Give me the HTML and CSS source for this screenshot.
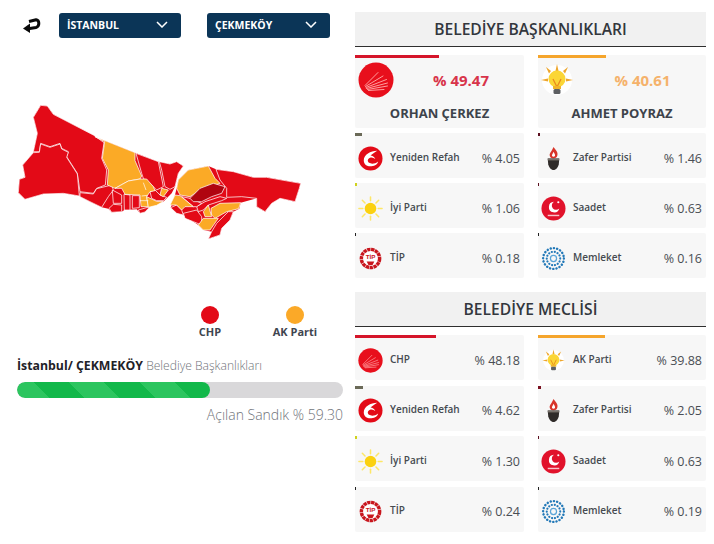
FILE: index.html
```html
<!DOCTYPE html>
<html lang="tr">
<head>
    <meta charset="UTF-8">
    <meta name="viewport" content="width=device-width, initial-scale=1.0">
    <title>Seçim Sonuçları</title>
    <link rel="stylesheet" href="styles.css">
</head>
<body>
    <!-- party logos, reused in both result lists -->
    <svg class="defs" width="0" height="0">
        <symbol id="logo-chp" viewBox="0 0 36 36">
            <circle cx="18" cy="18" r="17.5" fill="#e80f1c"/>
            <g stroke="#ff9f9f" stroke-width="1" stroke-linecap="round" fill="none">
                <path d="M7 23.500 L20 10.500"/>
                <path d="M7.500 24.500 L25 14"/>
                <path d="M8 25.500 L28.500 17.500"/>
                <path d="M8.500 26.500 L29.500 21"/>
                <path d="M9.500 27.500 L29.500 24"/>
                <path d="M10.500 28.500 L26 27.500"/>
            </g>
        </symbol>
        <symbol id="logo-akp" viewBox="0 0 36 36">
            <circle cx="18" cy="18" r="15" fill="#fff"/>
            <g fill="#eea62c">
                <path d="M16.500 9 L18 2 L19.500 9 Z"/>
                <path d="M24 9 L29 5 L26 11.500 Z"/>
                <path d="M27 16.500 L34 18 L27 19.500 Z"/>
                <path d="M12 9 L7 5 L10 11.500 Z"/>
                <path d="M9 16.500 L2 18 L9 19.500 Z"/>
            </g>
            <circle cx="18" cy="17" r="8.500" fill="#fbd636"/>
            <path d="M14 17 L18 25 L22 17" fill="none" stroke="#ea8a1d" stroke-width="1.300"/>
            <rect x="14" y="24" width="8" height="3" fill="#f0b429"/>
            <rect x="14.500" y="27" width="7" height="5" rx="1.500" fill="#5d5f62"/>
        </symbol>
        <symbol id="logo-yrp" viewBox="0 0 26 26">
            <circle cx="13" cy="13" r="12.500" fill="#e30a17"/>
            <path d="M20 5 C13 5 6 9 6 15 C6 19.500 10 21.500 14 21 C18 20.500 20.500 18.500 21 16 C18 18.500 14 19 11.500 17.500 C9.500 16 10 13.500 12 12.500 C14 11.500 16 12 18 13.500 C17 11.500 15 10 13 10 C15 8 18 6.500 20 5 Z" fill="#fff"/>
        </symbol>
        <symbol id="logo-iyi" viewBox="0 0 26 26">
            <circle cx="13" cy="13" r="6" fill="#fbd10f"/>
            <g stroke="#fde767" stroke-width="1.600" stroke-linecap="round">
                <path d="M13 1 V5"/>
                <path d="M13 21 V25"/>
                <path d="M1 13 H5"/>
                <path d="M21 13 H25"/>
                <path d="M4.500 4.500 L7.300 7.300"/>
                <path d="M18.700 18.700 L21.500 21.500"/>
                <path d="M21.500 4.500 L18.700 7.300"/>
                <path d="M7.300 18.700 L4.500 21.500"/>
            </g>
        </symbol>
        <symbol id="logo-zafer" viewBox="0 0 26 26">
            <path d="M13 1 C15 4 18 6 17 10 C16.500 12.500 14.500 13 13 13 C11 13 9 11.500 9 9.500 C9 7 11.500 5 13 1 Z" fill="#d8352a"/>
            <path d="M13 6 C14 8 15 9 14.500 10.500 C14 11.500 12 11.500 11.500 10.500 C11 9 12.500 8 13 6 Z" fill="#fff"/>
            <path d="M7 13 H19 L18.500 19 C18 22 15.500 25 13 25 C10.500 25 8 22 7.500 19 Z" fill="#2f2b29"/>
            <path d="M7 13 H19 V15 H7 Z" fill="#77706a"/>
        </symbol>
        <symbol id="logo-saadet" viewBox="0 0 26 26">
            <circle cx="13" cy="13" r="12.500" fill="#e1122b"/>
            <path d="M13.500 6 A5.500 5.500 0 1 0 19 13 A4.500 4.500 0 1 1 13.500 6 Z" fill="#fff"/>
            <circle cx="18" cy="6.500" r="1.100" fill="#fff"/>
            <rect x="7" y="19.500" width="12" height="1.500" fill="#fff" opacity=".75"/>
        </symbol>
        <symbol id="logo-memleket" viewBox="0 0 26 26">
            <g fill="none" stroke="#2379b8" stroke-linecap="round">
                <circle cx="13" cy="13" r="10.800" stroke-width="2.500" stroke-dasharray=".1 3.300"/>
                <circle cx="13" cy="13" r="7" stroke-width="2.200" stroke-dasharray=".1 3"/>
                <circle cx="13" cy="13" r="3.200" stroke="#5aa5d8" stroke-width="1.300"/>
            </g>
        </symbol>
    </svg>

    <div class="page">
        <div class="left-col">
            <div class="filters">
                <svg class="back-icon" viewBox="0 0 18 15" width="18" height="15">
                    <path d="M6 3.500 L13 1.800 C16.500 1.500 17 8.500 13 9.500 L3.500 11" fill="none" stroke="#0a0a0a" stroke-width="3"/>
                    <path d="M0 10.500 L7 5.500 L7 15 Z" fill="#0a0a0a"/>
                </svg>
                <div class="select select-city">
                    <span>İSTANBUL</span>
                    <svg class="chevron" viewBox="0 0 12 7" width="12" height="7"><path d="M1 1 L6 6 L11 1" fill="none" stroke="#fff" stroke-width="1.500"/></svg>
                </div>
                <div class="select select-district">
                    <span>ÇEKMEKÖY</span>
                    <svg class="chevron" viewBox="0 0 12 7" width="12" height="7"><path d="M1 1 L6 6 L11 1" fill="none" stroke="#fff" stroke-width="1.500"/></svg>
                </div>
            </div>

            <svg class="map" viewBox="0 0 960 480" width="320" height="160">
                <!-- base shapes so the small districts have no gaps between them -->
                <path class="base" d="M100 82 L122 46 L142 48 L160 73 L285 140 L405 188 L475 215 L510 222 L530 215 L550 228 L535 250 L525 290 L515 310 L490 335 L445 352 L435 366 L420 370 L410 358 L373 360 L365 365 L335 367 L325 356 L305 352 L270 335 L238 318 L190 310 L130 312 L75 328 L55 308 L58 268 L75 262 L68 225 L100 188 L112 130 Z"/>
                <path class="base" d="M535 270 L565 240 L625 228 L648 238 L700 245 L760 262 L800 262 L902 280 L898 295 L885 335 L840 325 L815 340 L795 365 L770 350 L770 325 L722 338 L718 356 L700 365 L690 390 L665 415 L660 435 L625 447 L635 425 L610 420 L595 405 L580 395 L550 375 L512 353 L525 315 L530 295 Z"/>
                <g class="red">
                    <path d="M100 82 L122 46 L142 48 L160 73 L280 135 L312 158 L305 205 L320 240 L316 285 L290 295 L280 310 L240 305 L232 250 L200 200 L205 185 L185 175 L180 160 L150 170 L122 160 L118 185 L100 185 L112 130 Z"/>
                    <path d="M122 162 L150 172 L180 162 L185 177 L205 187 L200 202 L232 252 L238 318 L190 310 L130 312 L75 328 L55 308 L58 268 L75 262 L68 225 L100 188 L118 187 Z"/>
                    <path d="M240 308 L280 312 L290 296 L315 290 L335 285 L340 300 L325 320 L305 352 L270 335 L240 320 Z"/>
                    <path d="M408 190 L475 215 L480 240 L490 290 L470 300 L455 285 L430 265 L425 250 Z"/>
                    <path d="M478 215 L510 222 L530 215 L550 228 L535 250 L525 290 L510 298 L495 290 L485 240 Z"/>
                    <path d="M337 300 L365 315 L365 340 L340 340 Z"/>
                    <path d="M372 313 L390 315 L390 360 L373 360 Z"/>
                    <path d="M397 317 L418 317 L418 353 L397 355 Z"/>
                    <path d="M340 343 L365 345 L365 365 L335 367 L327 355 Z"/>
                    <path d="M415 360 L450 350 L435 366 L420 370 Z"/>
                    <path d="M450 305 L465 300 L480 315 L500 322 L490 332 L470 332 L455 325 Z"/>
                    <path d="M648 238 L700 245 L760 262 L800 262 L902 280 L898 295 L885 335 L840 325 L815 340 L795 365 L770 350 L770 325 L725 320 L680 322 L680 295 L660 270 Z"/>
                    <path d="M650 400 L685 365 L700 365 L690 390 L665 415 L660 435 L625 447 L635 425 Z"/>
                    <path d="M590 350 L615 335 L660 320 L680 325 L665 332 L625 345 L610 360 L595 365 Z"/>
                    <path d="M550 370 L590 360 L605 380 L605 405 L580 395 L555 385 Z"/>
                    <path d="M512 353 L530 345 L545 360 L550 375 L530 370 Z"/>
                    <path d="M545 320 L570 325 L605 340 L590 350 L580 350 Z"/>
                </g>
                <g class="orange">
                    <path d="M285 140 L405 188 L405 212 L425 258 L420 267 L385 273 L345 295 L322 285 L325 240 L307 205 L314 155 Z"/>
                    <path d="M345 295 L385 273 L420 267 L440 267 L460 290 L465 302 L450 305 L440 320 L445 350 L423 350 L420 315 L375 313 L365 295 Z"/>
                    <path d="M440 320 L455 327 L470 334 L490 334 L470 346 L445 352 Z"/>
                    <path d="M485 295 L505 300 L490 320 L480 315 Z"/>
                    <path d="M535 270 L565 240 L625 228 L645 265 L660 280 L600 300 L570 320 L540 315 L530 295 Z"/>
                    <path d="M510 345 L525 315 L540 317 L580 350 L555 350 L545 360 L530 345 Z"/>
                    <path d="M633 355 L660 340 L722 338 L716 356 L680 365 L645 385 L635 375 Z"/>
                    <path d="M610 385 L655 385 L630 420 L610 420 L595 405 Z"/>
                    <path d="M610 365 L625 345 L635 380 L615 380 Z"/>
                </g>
                <path class="dark" d="M570 325 L600 295 L640 280 L675 290 L665 310 L635 320 L605 335 L580 335 Z"/>
                <path class="lines" d="M430 278 L438 300 M420 332 L445 332 M425 318 L442 316"/>
            </svg>

            <div class="legend">
                <div class="legend-item">
                    <span class="dot dot-chp"></span>
                    <span>CHP</span>
                </div>
                <div class="legend-item">
                    <span class="dot dot-akp"></span>
                    <span>AK Parti</span>
                </div>
            </div>

            <div class="status">
                <p class="status-title"><b>İstanbul/ ÇEKMEKÖY</b> <span>Belediye Başkanlıkları</span></p>
                <div class="progress-bar-container">
                    <div class="progress-bar" style="width: 59.3%"></div>
                </div>
                <p class="status-note">Açılan Sandık % 59.30</p>
            </div>
        </div>

        <div class="right-col">
            <section class="results results-mayor">
                <h2>BELEDİYE BAŞKANLIKLARI</h2>
                <div class="card-grid">
                    <div class="card card-big">
                        <div class="bar" style="width: 49.47%; background: #d5152a"></div>
                        <div class="big-top">
                            <svg class="logo-big"><use href="#logo-chp"/></svg>
                            <span class="big-value red-text">% 49.47</span>
                        </div>
                        <div class="big-name">ORHAN ÇERKEZ</div>
                    </div>
                    <div class="card card-big">
                        <div class="bar" style="width: 40.61%; background: #f5a52c"></div>
                        <div class="big-top">
                            <svg class="logo-big logo-big-akp"><use href="#logo-akp"/></svg>
                            <span class="big-value orange-text">% 40.61</span>
                        </div>
                        <div class="big-name">AHMET POYRAZ</div>
                    </div>

                    <div class="card"><div class="bar" style="width: 4.05%; background: #6b6a58"></div><div class="row"><svg class="logo"><use href="#logo-yrp"/></svg><span class="name">Yeniden Refah</span><span class="value">% 4.05</span></div></div>
                    <div class="card"><div class="bar" style="width: 1.46%; background: #5c1020"></div><div class="row"><svg class="logo"><use href="#logo-zafer"/></svg><span class="name">Zafer Partisi</span><span class="value">% 1.46</span></div></div>
                    <div class="card"><div class="bar" style="width: 1.06%; background: #cfd21e"></div><div class="row"><svg class="logo"><use href="#logo-iyi"/></svg><span class="name">İyi Parti</span><span class="value">% 1.06</span></div></div>
                    <div class="card"><div class="bar" style="width: .63%; background: #5c1020"></div><div class="row"><svg class="logo"><use href="#logo-saadet"/></svg><span class="name">Saadet</span><span class="value">% 0.63</span></div></div>
                    <div class="card"><div class="bar" style="width: .6%; background: #222"></div><div class="row"><svg class="logo" viewBox="0 0 26 26"><circle cx="13" cy="13" r="9.500" fill="#fff" stroke="#c8161d" stroke-width="3.600" stroke-dasharray="3.500 .6"/><text class="tip-mark" x="13" y="13.500">TİP</text><path d="M9 16 H17 L15 20 H11 Z" fill="#c8161d"/></svg><span class="name">TİP</span><span class="value">% 0.18</span></div></div>
                    <div class="card"><div class="bar" style="width: .6%; background: #222"></div><div class="row"><svg class="logo"><use href="#logo-memleket"/></svg><span class="name">Memleket</span><span class="value">% 0.16</span></div></div>
                </div>
            </section>

            <section class="results results-council">
                <h2>BELEDİYE MECLİSİ</h2>
                <div class="card-grid">
                    <div class="card"><div class="bar" style="width: 48.18%; background: #d5152a"></div><div class="row"><svg class="logo"><use href="#logo-chp"/></svg><span class="name">CHP</span><span class="value">% 48.18</span></div></div>
                    <div class="card"><div class="bar" style="width: 39.88%; background: #f5a52c"></div><div class="row"><svg class="logo"><use href="#logo-akp"/></svg><span class="name">AK Parti</span><span class="value">% 39.88</span></div></div>
                    <div class="card"><div class="bar" style="width: 4.62%; background: #6b6a58"></div><div class="row"><svg class="logo"><use href="#logo-yrp"/></svg><span class="name">Yeniden Refah</span><span class="value">% 4.62</span></div></div>
                    <div class="card"><div class="bar" style="width: 2.05%; background: #7a1020"></div><div class="row"><svg class="logo"><use href="#logo-zafer"/></svg><span class="name">Zafer Partisi</span><span class="value">% 2.05</span></div></div>
                    <div class="card"><div class="bar" style="width: 1.3%; background: #cfd21e"></div><div class="row"><svg class="logo"><use href="#logo-iyi"/></svg><span class="name">İyi Parti</span><span class="value">% 1.30</span></div></div>
                    <div class="card"><div class="bar" style="width: .63%; background: #5c1020"></div><div class="row"><svg class="logo"><use href="#logo-saadet"/></svg><span class="name">Saadet</span><span class="value">% 0.63</span></div></div>
                    <div class="card"><div class="bar" style="width: .6%; background: #222"></div><div class="row"><svg class="logo" viewBox="0 0 26 26"><circle cx="13" cy="13" r="9.500" fill="#fff" stroke="#c8161d" stroke-width="3.600" stroke-dasharray="3.500 .6"/><text class="tip-mark" x="13" y="13.500">TİP</text><path d="M9 16 H17 L15 20 H11 Z" fill="#c8161d"/></svg><span class="name">TİP</span><span class="value">% 0.24</span></div></div>
                    <div class="card"><div class="bar" style="width: .6%; background: #222"></div><div class="row"><svg class="logo"><use href="#logo-memleket"/></svg><span class="name">Memleket</span><span class="value">% 0.19</span></div></div>
                </div>
            </section>
        </div>
    </div>
</body>
</html>
```

FILE: styles.css
```css
body {
    margin: 0;
    background: #fff;
    font-family: 'Open Sans', sans-serif;
    color: #3a3f47;
    overflow: hidden;
}

.defs {
    position: absolute;
}

.page {
    display: flex;
    height: 544px;
}

.left-col {
    width: 355px;
    flex: none;
}

.right-col {
    width: 351px;
    padding-top: 12px;
}

/* Filters */
.filters {
    display: flex;
    align-items: center;
    margin-top: 13px;
    padding-left: 23px;
    height: 25px;
}

.back-icon {
    margin-right: 18px;
}

.select {
    display: flex;
    align-items: center;
    justify-content: space-between;
    box-sizing: border-box;
    height: 25px;
    padding: 0 13px 2px 8px;
    background-color: #0b3557;
    border-radius: 3px;
    color: #fff;
    font-size: 10.5px;
    font-weight: 700;
}

.select-city {
    width: 122px;
    margin-right: 26px;
}

.select-district {
    width: 123px;
}

/* Map */
.map {
    display: block;
    margin-top: 52px;
}

.map path {
    stroke: #fff;
    stroke-width: 2.2;
    stroke-linejoin: round;
}

.map .base {
    fill: #e30a17;
    stroke: none;
}

.map .red path {
    fill: #e30a17;
}

.map .orange path {
    fill: #fbaa26;
}

.map .dark {
    fill: #b00510;
}

.map .lines {
    fill: none;
    stroke: #fff;
    stroke-width: 2;
}

/* Legend */
.legend {
    display: flex;
    justify-content: flex-end;
    gap: 15px;
    margin-top: 56px;
    padding-right: 25px;
}

.legend-item {
    display: flex;
    flex-direction: column;
    align-items: center;
    width: 70px;
    font-size: 11px;
    font-weight: 700;
    color: #3f4650;
}

.dot {
    width: 18px;
    height: 18px;
    border-radius: 50%;
}

.dot-chp {
    background-color: #e30a17;
}

.dot-akp {
    background-color: #fba928;
}

/* Status */
.status {
    margin: 19px 12px 0 17px;
}

.status-title {
    margin: 0;
    font-size: 12.3px;
    line-height: 16px;
    color: #1f2228;
}

.status-title span {
    font-weight: 300;
    font-size: 12.1px;
    color: #6f7379;
}

.progress-bar-container {
    height: 16px;
    margin-top: 8px;
    background-color: #d9d8da;
    border-radius: 8px;
    overflow: hidden;
}

.progress-bar {
    height: 100%;
    border-radius: 8px;
    background: repeating-linear-gradient(-135deg, #12b84a 0 25px, #2cc55f 25px 50px);
}

.status-note {
    margin: 7px 0 0;
    text-align: right;
    font-size: 14px;
    font-weight: 300;
    line-height: 20px;
    color: #70747a;
}

/* Results */
.results h2 {
    margin: 0 0 8px;
    height: 34px;
    line-height: 34px;
    text-align: center;
    font-size: 15.6px;
    font-weight: 600;
    background-color: #f1f1f1;
    border-bottom: 1px solid #2e2e2e;
    color: #33373d;
}

.results-council {
    margin-top: 14px;
}

.card-grid {
    display: grid;
    grid-template-columns: 169px 168px;
    column-gap: 14px;
    row-gap: 5px;
}

.results-council .card-grid {
    row-gap: 5.5px;
}

.card {
    height: 45px;
    background-color: #f7f7f7;
    border-radius: 2px;
}

.bar {
    height: 3px;
    min-width: 1px;
}

.row {
    display: flex;
    align-items: center;
    height: 42px;
    padding: 2px 4px 0 3px;
    box-sizing: border-box;
}

.logo {
    width: 25px;
    height: 25px;
    flex: none;
}

.tip-mark {
    text-anchor: middle;
    font-family: 'Liberation Sans', sans-serif;
    font-size: 6.5px;
    font-weight: 700;
    fill: #c8161d;
}

.name {
    flex: 1;
    margin: -3px 0 0 7px;
    font-size: 10px;
    font-weight: 600;
    color: #454a50;
    white-space: nowrap;
}

.value {
    font-size: 12.5px;
    color: #4a4e54;
}

.card-big {
    height: 73px;
}

.big-top {
    display: flex;
    align-items: center;
    padding: 4px 0 0 3px;
    height: 36px;
}

.logo-big {
    width: 36px;
    height: 36px;
    flex: none;
}

.logo-big-akp {
    margin-left: -2px;
}

.big-value {
    flex: 1;
    padding-left: 4px;
    text-align: center;
    font-size: 15px;
    font-weight: 700;
}

.red-text {
    color: #d8344a;
}

.orange-text {
    color: #f5b26b;
}

.big-name {
    margin-top: 6px;
    text-align: center;
    font-size: 13px;
    font-weight: 700;
    color: #3d434b;
}
```
